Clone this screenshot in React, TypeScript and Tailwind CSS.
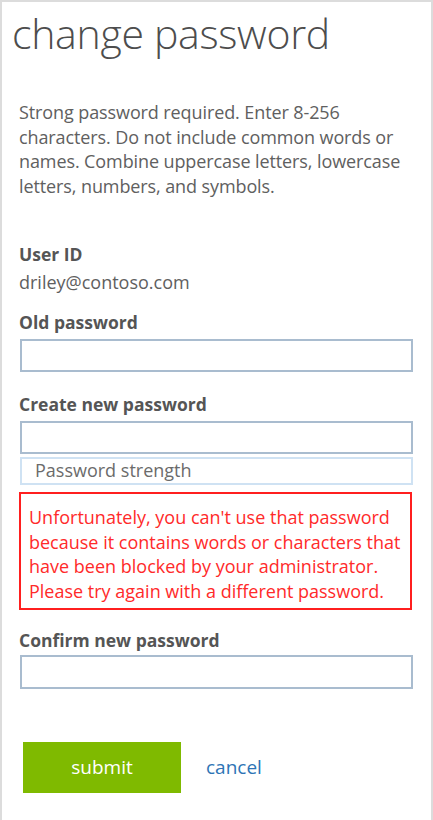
export default function App() {
  const font = { fontFamily: '"Open Sans", "Segoe UI", sans-serif' };
  return (
    <div className="w-[433px] h-[820px] bg-white overflow-hidden" style={font}>
      <div className="h-full border-x-2 border-t-2 border-[#dcdcdc] pl-[17px] pr-[18px]">
        <h1 className="-ml-[7px] mt-[3px] text-[41px] leading-[56px] font-light text-[#4d4d4d] tracking-[-0.3px]">
          change password
        </h1>

        <p className="mt-[39px] text-[18px] leading-[24.5px] text-[#606060] tracking-[-0.1px]">
          Strong password required. Enter 8-256
          <br />
          characters. Do not include common words or
          <br />
          names. Combine uppercase letters, lowercase
          <br />
          letters, numbers, and symbols.
        </p>

        <div className="mt-[44px] text-[17.5px] font-bold leading-[24px] text-[#555555]">User ID</div>
        <div className="mt-[4px] text-[18px] leading-[24px] text-[#606060]">driley@contoso.com</div>

        <div className="mt-[16px] text-[17.5px] font-bold leading-[24px] text-[#555555]">Old password</div>
        <div className="mt-[5px] ml-[1px] h-[33px] border-2 border-[#a9bccf] bg-white" />

        <div className="mt-[20px] text-[17.5px] font-bold leading-[24px] text-[#555555]">Create new password</div>
        <div className="mt-[5px] ml-[1px] h-[33px] border-2 border-[#a9bccf] bg-white" />
        <div className="mt-[3px] ml-[1px] h-[28px] border-2 border-[#cfe2f3] pl-[13px] text-[18px] leading-[23px] text-[#6b6b6b]">
          Password strength
        </div>

        <div className="mt-[7px] mr-[1px] border-2 border-[#ff1f1f] px-[8px] pt-[11px] pb-[5px] text-[18px] leading-[24.5px] text-[#ff2a2a]">
          Unfortunately, you can't use that password
          <br />
          because it contains words or characters that
          <br />
          have been blocked by your administrator.
          <br />
          Please try again with a different password.
        </div>

        <div className="mt-[18px] text-[17.5px] font-bold leading-[24px] text-[#555555]">Confirm new password</div>
        <div className="mt-[3px] ml-[1px] h-[34px] border-2 border-[#a9bccf] bg-white" />

        <div className="mt-[53px] ml-[4px] flex items-center gap-[25px]">
          <button className="w-[158px] h-[51px] bg-[#7fba00] text-white text-[19px]">submit</button>
          <a className="text-[19px] text-[#2e74b5]">cancel</a>
        </div>
      </div>
    </div>
  );
}
